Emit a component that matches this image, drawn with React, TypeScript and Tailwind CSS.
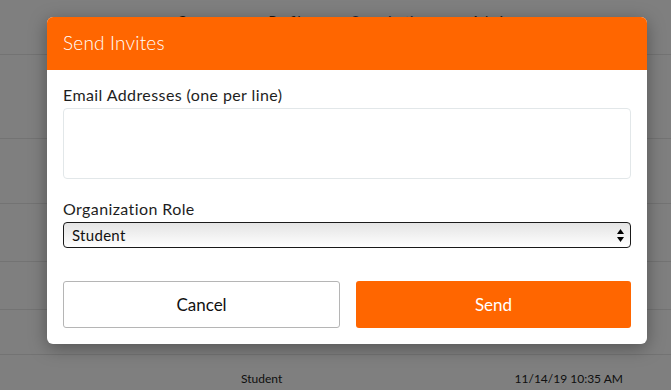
import React from "react";

const font = { fontFamily: "Lato, 'Noto Sans', Arial, sans-serif" };

function PageBehind() {
  return (
    <div className="w-full h-[390px] bg-white overflow-hidden">
      <nav className="h-[55px] border-b border-[#e6e6e6] flex items-start pt-[10px] text-[14px] text-[#333]">
        <div className="flex gap-[42px] pl-[177px]">
          <span>Courses</span>
          <span>Profile</span>
          <span className="text-[#2a4a7a]">Organization</span>
          <span>Admin</span>
        </div>
      </nav>
      <div className="h-[84px] border-b border-[#e6e6e6]" />
      <div className="h-[65px] border-b border-[#e6e6e6]" />
      <div className="h-[58px] border-b border-[#e6e6e6]" />
      <div className="h-[48px] border-b border-[#e6e6e6] flex items-center -ml-[62px]">
        <span className="font-bold text-[13px] text-black">Students</span>
      </div>
      <div className="h-[45px] border-b border-[#e6e6e6]" />
      <div className="h-[45px] flex items-center text-[12px] text-[#222] pt-[2px]">
        <span className="ml-[241px]">Student</span>
        <span className="ml-auto mr-[48px]">11/14/19 10:35 AM</span>
      </div>
    </div>
  );
}

function InviteModal() {
  return (
    <div className="absolute left-[47px] top-[17px] w-[600px] bg-white rounded-[6px] overflow-hidden shadow-[0_4px_18px_rgba(0,0,0,0.35)]">
      <div className="h-[53px] bg-[#ff6600] flex items-center px-4">
        <h2 className="text-white text-[19px] font-light tracking-[0.2px]">Send Invites</h2>
      </div>
      <div className="px-4 pt-[15px] pb-4">
        <label className="block text-[16px] leading-[20px] tracking-[0.4px] text-[#1e1e1e] mb-[3px]">Email Addresses (one per line)</label>
        <textarea className="block w-full h-[71px] border border-[#e2e7e9] rounded-[4px] resize-none outline-none" />
        <label className="block text-[16px] leading-[20px] tracking-[0.4px] text-[#1e1e1e] mt-[20px] mb-[3px]">Organization Role</label>
        <div className="relative">
          <select
            defaultValue="Student"
            className="block w-full h-[26px] appearance-none border border-[#1a1a1a] rounded-[4px] bg-gradient-to-b from-[#e4e4e4] via-[#f1f1f1] to-white px-2 text-[15px] tracking-[0.3px] text-[#111] outline-none"
            style={font}
          >
            <option>Student</option>
            <option>Instructor</option>
            <option>Admin</option>
          </select>
          <svg className="absolute right-[7px] top-[7px] pointer-events-none" width="7" height="13" viewBox="0 0 7 13">
            <path d="M3.5 0 L7 5 H0 Z" fill="#000" />
            <path d="M0 8 H7 L3.5 13 Z" fill="#000" />
          </svg>
        </div>
        <div className="flex gap-4 mt-[33px]">
          <button className="flex-1 h-[47px] bg-white border border-[#b5b5b5] rounded-[3px] text-[17px] text-[#111]">Cancel</button>
          <button className="flex-1 h-[47px] bg-[#ff6600] rounded-[3px] text-[17px] text-white">Send</button>
        </div>
      </div>
    </div>
  );
}

export default function App() {
  return (
    <div className="relative w-full h-[390px] overflow-hidden" style={font}>
      <PageBehind />
      <div className="absolute inset-0 bg-black/50" />
      <InviteModal />
    </div>
  );
}
